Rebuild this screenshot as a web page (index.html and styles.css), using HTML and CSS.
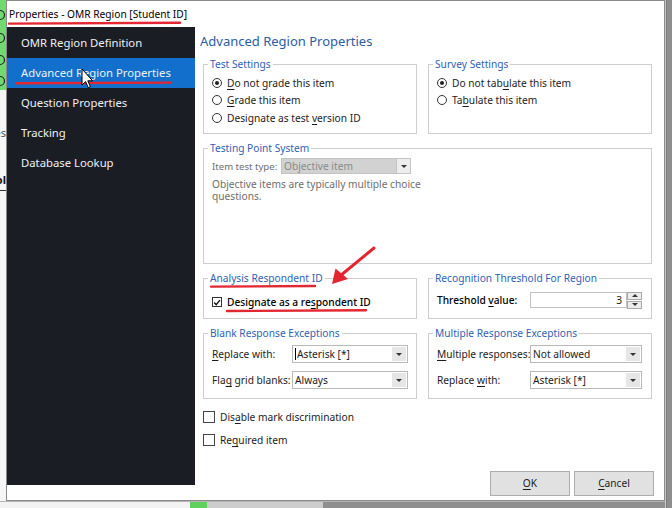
FILE: index.html
```html
<!DOCTYPE html>
<html>
<head>
<meta charset="utf-8">
<link rel="stylesheet" href="styles.css">
</head>
<body>
<div class="screen">
  <div class="desk-left">
    <div class="desk-green">
      <svg width="6" height="90" viewBox="0 0 6 90"><g fill="none" stroke="#222" stroke-width="1.2"><circle cx="0" cy="15" r="4.5"/><circle cx="0" cy="38" r="4.5"/><circle cx="0" cy="60" r="4.5"/><circle cx="0" cy="81" r="4.5"/></g></svg>
    </div>
    <div class="desk-white">
      <span class="frag frag-a">es</span>
      <span class="frag frag-b">ol</span>
      <span class="frag-line"></span>
    </div>
  </div>

  <div class="dialog">
    <div class="titlebar">Properties - OMR Region [Student ID]</div>
    <div class="dlg-body">
      <nav class="sidebar">
        <div class="nav-item">OMR Region Definition</div>
        <div class="nav-item active">Advanced Region Properties</div>
        <div class="nav-item">Question Properties</div>
        <div class="nav-item">Tracking</div>
        <div class="nav-item">Database Lookup</div>
      </nav>
      <div class="content">
        <div class="heading">Advanced Region Properties</div>
        <div class="groups">
          <fieldset class="grp">
            <legend>Test Settings</legend>
            <div class="pad-test">
              <div class="opt"><span class="radio on"></span><span><u>D</u>o not grade this item</span></div>
              <div class="opt"><span class="radio"></span><span><u>G</u>rade this item</span></div>
              <div class="opt"><span class="radio"></span><span>Designate as test <u>v</u>ersion ID</span></div>
            </div>
          </fieldset>
          <fieldset class="grp">
            <legend>Survey Settings</legend>
            <div class="pad-test">
              <div class="opt"><span class="radio on"></span><span>Do not tab<u>u</u>late this item</span></div>
              <div class="opt"><span class="radio"></span><span>Ta<u>b</u>ulate this item</span></div>
            </div>
          </fieldset>
          <fieldset class="grp span2">
            <legend>Testing Point System</legend>
            <div class="tp-row">
              <span class="tp-label">Item test type:</span>
              <span class="combo disabled w130"><span class="val">Objective item</span><span class="dd"></span></span>
            </div>
            <div class="desc">Objective items are typically multiple choice<br>questions.</div>
          </fieldset>
          <fieldset class="grp">
            <legend>Analysis Respondent ID</legend>
            <div class="pad-ari">
              <div class="opt dark"><span class="check on"><svg width="9" height="9" viewBox="0 0 9 9"><path d="M1.3 4.6 L3.6 6.9 L7.8 1.8" fill="none" stroke="#111" stroke-width="1.6"/></svg></span><span>Designate as a re<u>s</u>pondent ID</span></div>
            </div>
          </fieldset>
          <fieldset class="grp">
            <legend>Recognition Threshold For Region</legend>
            <div class="thr-row">
              <span class="lbl93 dark">Threshold <u>v</u>alue:</span>
              <span class="spin-input">3</span>
              <span class="spinner"><span class="sp-btn up"></span><span class="sp-btn down"></span></span>
            </div>
          </fieldset>
          <fieldset class="grp">
            <legend>Blank Response Exceptions</legend>
            <div class="form-rows">
              <div class="frow"><span class="lbl80"><u>R</u>eplace with:</span><span class="combo w116"><span class="val"><span class="caret"></span>Asterisk [*]</span><span class="dd"></span></span></div>
              <div class="frow"><span class="lbl80">Fla<u>g</u> grid blanks:</span><span class="combo w116"><span class="val">Always</span><span class="dd"></span></span></div>
            </div>
          </fieldset>
          <fieldset class="grp">
            <legend>Multiple Response Exceptions</legend>
            <div class="form-rows">
              <div class="frow"><span class="lbl93"><u>M</u>ultiple responses:</span><span class="combo w112"><span class="val">Not allowed</span><span class="dd"></span></span></div>
              <div class="frow"><span class="lbl93">Replace <u>w</u>ith:</span><span class="combo w112"><span class="val">Asterisk [*]</span><span class="dd"></span></span></div>
            </div>
          </fieldset>
        </div>
        <div class="checks">
          <div class="opt"><span class="check big"></span><span>Dis<u>a</u>ble mark discrimination</span></div>
          <div class="opt"><span class="check big"></span><span>Re<u>q</u>uired item</span></div>
        </div>
        <div class="buttons">
          <div class="btn"><u>O</u>K</div>
          <div class="btn"><u>C</u>ancel</div>
        </div>
      </div>
    </div>
  </div>

  <div class="desk-right"></div>
  <div class="desk-bottom"></div>

  <svg class="annot" width="672" height="508" viewBox="0 0 672 508">
    <g stroke="#e3262f" stroke-linecap="round" fill="none">
      <path d="M9 23.6 L180 22.8" stroke-width="2.4"/>
      <path d="M16 83.2 L171 82.6" stroke-width="2.4"/>
      <path d="M211 286.6 L315 286" stroke-width="2.4"/>
      <path d="M227 311 L366 310.2" stroke-width="2.4"/>
      <path d="M374 248 L340 276" stroke-width="3"/>
    </g>
    <polygon points="332,284 335.5,268.5 348,279" fill="#e3262f"/>
    <path d="M82 69 L82 85 L85.6 81.6 L88.2 87.6 L90.4 86.7 L87.8 80.8 L92.6 80.8 Z" fill="#fff" stroke="#000" stroke-width="1" stroke-linejoin="round"/>
  </svg>
</div>
</body>
</html>
```

FILE: styles.css
```css
* { box-sizing: border-box; }
html, body { margin: 0; padding: 0; background: #8c8c8c; }
.screen {
  position: relative;
  width: 672px;
  height: 508px;
  overflow: hidden;
  display: grid;
  grid-template-columns: 6px 659px 7px;
  grid-template-rows: 501px 7px;
  font-family: "Noto Sans", "Open Sans", sans-serif;
  font-size: 10.2px;
  color: #1c1c1c;
}
.desk-left { grid-column: 1; grid-row: 1; display: flex; flex-direction: column; overflow: hidden; }
.desk-green { height: 90px; background: #72d872; }
.desk-green svg { display: block; }
.desk-white { flex: 1; background: #f6f6f6; display: flex; flex-direction: column; align-items: flex-end; }
.frag { font-size: 11px; line-height: 14px; white-space: nowrap; }
.frag-a { margin-top: 36px; color: #555; }
.frag-b { margin-top: 33px; font-weight: 700; color: #111; }
.frag-line { align-self: stretch; height: 1px; background: #333; margin-top: 3px; }
.desk-right { grid-column: 3; grid-row: 1 / 3; background: linear-gradient(to right, #c9c9c9 0 1px, #7a7a7a 1px 2px, #8e8e8e 2px); }
.desk-bottom { grid-column: 1 / 3; grid-row: 2; background: linear-gradient(to right, #f3f3f3 0 190px, #5fcf5f 190px 207px, #cdcdcd 207px 323px, #8f8f8f 323px); border-top: 1px solid #b5b5b5; }

.dialog {
  grid-column: 2; grid-row: 1;
  background: #fff;
  border: 1px solid #8a8a8a;
  display: flex; flex-direction: column;
}
.titlebar {
  height: 26px;
  line-height: 27px;
  padding-left: 2px;
  font-size: 10.2px;
  color: #000;
  white-space: nowrap;
}
.dlg-body { flex: 1; display: flex; align-items: flex-start; }
.sidebar {
  width: 188px; height: 458px;
  background: #1b1d25;
  padding-top: 1px;
}
.nav-item {
  height: 30px; line-height: 30px;
  padding-left: 14px;
  color: #eef0f3;
  font-size: 11.3px;
  white-space: nowrap;
}
.nav-item.active { background: #1270cc; }

.content { flex: 1; padding: 4px 0 0 8px; }
.heading {
  margin-left: -3px;
  height: 20px; line-height: 20px;
  font-size: 13px;
  color: #2a5d9f;
  margin-bottom: 5px;
}
.groups {
  display: grid;
  grid-template-columns: 214px 224px;
  grid-template-rows: 78px 124px 49px 74px;
  column-gap: 11px;
  row-gap: 6px;
}
.grp {
  margin: 0; min-width: 0; height: 100%;
  border: 1px solid #cdcdcd;
  padding: 0 4px 0 8px;
}
.span2 { grid-column: 1 / 3; }
legend {
  margin-left: -4px;
  padding: 0 2px;
  line-height: 16px;
  color: #2f62b3;
  white-space: nowrap;
}
u { text-decoration-thickness: 1px; text-underline-offset: 1.5px; }
.pad-test { padding-top: 2px; }
.opt { display: flex; align-items: center; gap: 5px; height: 17.5px; white-space: nowrap; }
.radio {
  width: 10px; height: 10px; border: 1px solid #333; border-radius: 50%;
  display: inline-flex; align-items: center; justify-content: center; flex: none;
}
.radio.on::after { content: ""; width: 4px; height: 4px; border-radius: 50%; background: #222; }
.check {
  width: 10px; height: 10px; border: 1px solid #333; flex: none;
  display: inline-flex; align-items: center; justify-content: center; background: #fff;
}
.check.big { width: 12px; height: 12px; border-color: #444; }
.dark { color: #000; font-weight: 500; }

.tp-row { display: flex; align-items: center; margin-top: 2px; height: 16px; }
.tp-label { width: 69px; color: #707070; white-space: nowrap; font-size: 9.6px; }
.desc { margin-top: 4px; line-height: 12px; color: #6e6e6e; }

.combo {
  height: 18px; display: flex; border: 1px solid #b9b9b9; background: #fff;
}
.combo .val { flex: 1; padding-left: 2px; line-height: 15px; white-space: nowrap; display: flex; align-items: center; }
.combo .dd {
  width: 14px; margin: 1px; background: #e6e6e6;
  display: flex; align-items: center; justify-content: center;
}
.combo .dd::after {
  content: ""; border-left: 3px solid transparent; border-right: 3px solid transparent; border-top: 3px solid #333;
}
.combo.disabled { height: 16px; background: #d2d2d2; border-color: #c4c4c4; }
.combo.disabled .val { color: #8a8a8a; }
.combo.disabled .dd { background: #ededed; margin: 0; border-left: 1px solid #c4c4c4; }
.w130 { width: 130px; }
.w116 { width: 116px; }
.w112 { width: 112px; }
.caret { width: 1px; height: 12px; background: #000; margin-right: 1px; }

.pad-ari { padding-top: 7px; }
.opt.dark { height: 18px; }

.thr-row { display: flex; align-items: center; margin-top: 5px; height: 18px; }
.lbl93 { width: 93px; white-space: nowrap; }
.lbl80 { width: 80px; white-space: nowrap; }
.spin-input {
  width: 97px; height: 16px; border: 1px solid #c2c2c2; text-align: right; padding-right: 4px; line-height: 14px;
}
.spinner { display: flex; flex-direction: column; gap: 1px; width: 15px; height: 17px; }
.sp-btn { flex: 1; border: 1px solid #a9a9a9; background: #ececec; display: flex; align-items: center; justify-content: center; }
.sp-btn.up::after { content: ""; border-left: 3px solid transparent; border-right: 3px solid transparent; border-bottom: 3px solid #333; }
.sp-btn.down::after { content: ""; border-left: 3px solid transparent; border-right: 3px solid transparent; border-top: 3px solid #333; }

.form-rows { padding-top: 4px; display: flex; flex-direction: column; gap: 8px; }
.frow { display: flex; align-items: center; }

.checks { margin-top: 9px; display: flex; flex-direction: column; gap: 5px; }
.checks .opt { height: 18px; gap: 5px; }
.buttons { margin-top: 22px; display: flex; justify-content: flex-end; gap: 4px; margin-right: 10px; }
.btn {
  width: 80px; height: 25px; line-height: 23px; text-align: center;
  background: #e1e1e1; border: 1px solid #adadad;
}
.annot { position: absolute; left: 0; top: 0; pointer-events: none; }
```
